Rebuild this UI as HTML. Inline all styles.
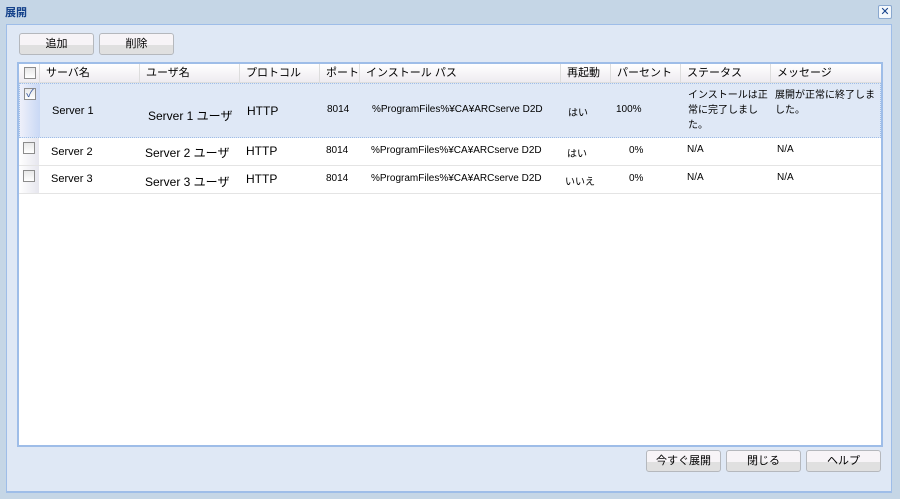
<!DOCTYPE html><html><head><meta charset="utf-8"><style>
*{margin:0;padding:0;box-sizing:border-box}
body{width:900px;height:499px;background:#c5d6e6;font-family:"Liberation Sans","Noto Sans CJK JP",sans-serif;font-size:11px;color:#000;position:relative;overflow:hidden}
.a{position:absolute}
.title{left:5px;top:4px;font-weight:bold;color:#15428b;font-size:11px}
.close{left:878px;top:5px;width:14px;height:14px;border:1px solid #8aa8cf;background:#f4f8fc;border-radius:2px;color:#15428b;font-size:11px;line-height:12px;text-align:center}
.panel{left:6px;top:24px;width:886px;height:469px;background:#dfe8f5;border:1px solid #9ebde8;border-bottom:2px solid #9ebde8}
.btn{height:22px;border:1px solid #b5b8bd;border-radius:3px;background:linear-gradient(#f7f4f7 0,#f7f4f7 55%,#e0e0e0 55%);text-align:center;line-height:20px;font-size:11px}
.grid{left:17px;top:62px;width:866px;height:385px;background:#fff;border:2px solid #9ebde8}
.hd{left:0;top:0;width:862px;height:19px;background:linear-gradient(#fff,#eeebf0);border-bottom:1px solid #ddd}
.hc{top:0;height:19px;line-height:19px;padding-left:6px;border-right:1px solid #ddd}
.cb{width:12px;height:12px;border:1px solid #8c8c8c;background:linear-gradient(#e8e8e8,#fff)}
.row{left:0;width:862px;border-bottom:1px solid #e4e4e4}
.c{position:absolute;font-size:11px}
</style></head><body>
<div class="a title">展開</div>
<div class="a close">✕</div>
<div class="a panel"></div>
<div class="a btn" style="left:19px;top:33px;width:75px">追加</div>
<div class="a btn" style="left:99px;top:33px;width:75px">削除</div>
<div class="a grid">
<div class="a hd">
<div class="a hc" style="left:0;width:21px"><div class="cb" style="margin:3px 0 0 -1px"></div></div>
<div class="a hc" style="left:21px;width:100px">サーバ名</div>
<div class="a hc" style="left:121px;width:100px">ユーザ名</div>
<div class="a hc" style="left:221px;width:80px">プロトコル</div>
<div class="a hc" style="left:301px;width:40px">ポート</div>
<div class="a hc" style="left:341px;width:201px">インストール パス</div>
<div class="a hc" style="left:542px;width:50px">再起動</div>
<div class="a hc" style="left:592px;width:70px">パーセント</div>
<div class="a hc" style="left:662px;width:90px">ステータス</div>
<div class="a hc" style="left:752px;width:110px;border:none">メッセージ</div>
</div>
<div class="a row" style="top:19px;height:55px;background:#dfe8f6;border:1px dotted #9ebde8">
<div class="c" style="left:0;top:0;width:20px;height:53px;background:linear-gradient(90deg,#eef0fa,#c9d8f5)"></div>
<div class="c cb" style="left:4px;top:4px;color:#3a5aa0;font-size:11px;line-height:10px;text-align:center">✓</div>
<div class="c" style="left:32px;top:21px">Server 1</div>
<div class="c" style="left:128px;top:23px;font-size:12px">Server 1 ユーザ</div>
<div class="c" style="left:227px;top:20px;font-size:12px">HTTP</div>
<div class="c" style="left:307px;top:20px;font-size:10px">8014</div>
<div class="c" style="left:352px;top:20px;font-size:10px">%ProgramFiles%¥CA¥ARCserve D2D</div>
<div class="c" style="left:548px;top:20px;font-size:10px">はい</div>
<div class="c" style="left:596px;top:20px;font-size:10px">100%</div>
<div class="c" style="left:668px;top:4px;width:80px;line-height:15px;font-size:10px">インストールは正常に完了しました。</div>
<div class="c" style="left:755px;top:4px;width:108px;line-height:15px;font-size:10px">展開が正常に終了しました。</div>
</div>
<div class="a row" style="top:74px;height:28px">
<div class="c" style="left:0;top:0;width:20px;height:27px;background:linear-gradient(90deg,#fff,#e6e6ee)"></div>
<div class="c cb" style="left:4px;top:4px"></div>
<div class="c" style="left:32px;top:8px">Server 2</div>
<div class="c" style="left:126px;top:6px;font-size:12px">Server 2 ユーザ</div>
<div class="c" style="left:227px;top:6px;font-size:12px">HTTP</div>
<div class="c" style="left:307px;top:7px;font-size:10px">8014</div>
<div class="c" style="left:352px;top:7px;font-size:10px">%ProgramFiles%¥CA¥ARCserve D2D</div>
<div class="c" style="left:548px;top:7px;font-size:10px">はい</div>
<div class="c" style="left:610px;top:7px;font-size:10px">0%</div>
<div class="c" style="left:668px;top:6px;font-size:10px">N/A</div>
<div class="c" style="left:758px;top:6px;font-size:10px">N/A</div>
</div>
<div class="a row" style="top:102px;height:28px">
<div class="c" style="left:0;top:0;width:20px;height:27px;background:linear-gradient(90deg,#fff,#e6e6ee)"></div>
<div class="c cb" style="left:4px;top:4px"></div>
<div class="c" style="left:32px;top:7px">Server 3</div>
<div class="c" style="left:126px;top:7px;font-size:12px">Server 3 ユーザ</div>
<div class="c" style="left:227px;top:6px;font-size:12px">HTTP</div>
<div class="c" style="left:307px;top:7px;font-size:10px">8014</div>
<div class="c" style="left:352px;top:7px;font-size:10px">%ProgramFiles%¥CA¥ARCserve D2D</div>
<div class="c" style="left:546px;top:7px;font-size:10px">いいえ</div>
<div class="c" style="left:610px;top:7px;font-size:10px">0%</div>
<div class="c" style="left:668px;top:6px;font-size:10px">N/A</div>
<div class="c" style="left:758px;top:6px;font-size:10px">N/A</div>
</div>
</div>
<div class="a btn" style="left:646px;top:450px;width:75px">今すぐ展開</div>
<div class="a btn" style="left:726px;top:450px;width:75px">閉じる</div>
<div class="a btn" style="left:806px;top:450px;width:75px">ヘルプ</div>
</body></html>
